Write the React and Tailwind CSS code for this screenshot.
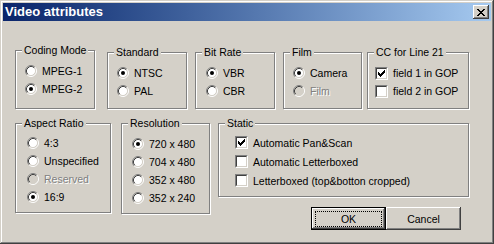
import React from 'react';

// Win2000-style "Video attributes" dialog

function Radio({ label, checked, disabled }) {
  return (
    <div className="flex items-center h-[18px]">
      <svg width="12" height="12" viewBox="0 0 12 12" className="shrink-0">
        <circle cx="6" cy="6" r="4.5" fill={disabled ? '#d4d0c8' : '#fff'} />
        <path d="M2.11 9.89 A5.5 5.5 0 0 1 9.89 2.11" fill="none" stroke="#808080" />
        <path d="M9.89 2.11 A5.5 5.5 0 0 1 2.11 9.89" fill="none" stroke="#fff" />
        <path d="M2.82 9.18 A4.5 4.5 0 0 1 9.18 2.82" fill="none" stroke="#404040" />
        <path d="M9.18 2.82 A4.5 4.5 0 0 1 2.82 9.18" fill="none" stroke="#d4d0c8" />
        {checked && <circle cx="6" cy="6" r="2" fill={disabled ? '#808080' : '#000'} />}
      </svg>
      <span
        className={`ml-[5px] whitespace-nowrap ${
          disabled ? 'text-[#808080] [text-shadow:1px_1px_0_#fff]' : 'text-black'
        }`}
      >
        {label}
      </span>
    </div>
  );
}

const CHECK = [
  [6, 0], [5, 1], [6, 1], [0, 2], [4, 2], [5, 2], [6, 2],
  [0, 3], [1, 3], [3, 3], [4, 3], [5, 3], [0, 4], [1, 4], [2, 4], [3, 4], [4, 4],
  [1, 5], [2, 5], [3, 5], [2, 6],
];

function Check({ label, checked, className = 'h-[18px]' }) {
  return (
    <div className={`flex items-center ${className}`}>
      <span className="w-[13px] h-[13px] shrink-0 border border-t-[#808080] border-l-[#808080] border-r-white border-b-white">
        <span className="block w-full h-full bg-white border border-t-[#404040] border-l-[#404040] border-r-[#d4d0c8] border-b-[#d4d0c8] p-[1px]">
          {checked && (
            <svg width="7" height="7" viewBox="0 0 7 7" shapeRendering="crispEdges" className="block">
              {CHECK.map(([x, y]) => (
                <rect key={`${x}-${y}`} x={x} y={y} width="1" height="1" fill="#000" />
              ))}
            </svg>
          )}
        </span>
      </span>
      <span className="ml-[5px] whitespace-nowrap">{label}</span>
    </div>
  );
}

function Group({ label, className, children }) {
  return (
    <div className={`relative shrink-0 border border-[#808080] shadow-[inset_1px_1px_0_#fff,1px_1px_0_#fff] ${className}`}>
      <span className="absolute -top-[8px] left-[6px] bg-[#d4d0c8] px-[2px] leading-[14px] whitespace-nowrap">
        {label}
      </span>
      {children}
    </div>
  );
}

const bevel =
  'shadow-[inset_-1px_-1px_0_#404040,inset_1px_1px_0_#fff,inset_-2px_-2px_0_#808080,inset_2px_2px_0_#d4d0c8]';

export default function App() {
  return (
    <div className="w-[494px] h-[244px] bg-[#d4d0c8] p-[3px] font-['Liberation_Sans',Arial,sans-serif] text-[10.5px] leading-[18px] text-black shadow-[inset_-1px_-1px_0_#404040,inset_1px_1px_0_#d4d0c8,inset_-2px_-2px_0_#808080,inset_2px_2px_0_#fff] overflow-hidden">
      {/* title bar */}
      <div className="h-[18px] flex items-center justify-between bg-gradient-to-r from-[#0a246a] to-[#a6caf0] pl-[2px] pr-[2px]">
        <span className="text-white font-bold text-[13px] leading-[18px]">Video attributes</span>
        <div className={`w-[16px] h-[14px] bg-[#d4d0c8] flex items-center justify-center ${bevel}`}>
          <svg width="8" height="7" viewBox="0 0 8 7" shapeRendering="crispEdges">
            <path d="M0 0h2v1h-2zM6 0h2v1h-2zM1 1h2v1h-2zM5 1h2v1h-2zM2 2h4v1h-4zM3 3h2v1h-2zM2 4h4v1h-4zM1 5h2v1h-2zM5 5h2v1h-2zM0 6h2v1h-2zM6 6h2v1h-2z" fill="#000" />
          </svg>
        </div>
      </div>

      <div className="pl-[12px]">
        {/* row 1 */}
        <div className="flex items-start mt-[29px]">
          <Group label="Coding Mode" className="w-[80px] h-[59px] pt-[11px] pl-[9px]">
            <Radio label="MPEG-1" />
            <Radio label="MPEG-2" checked />
          </Group>
          <Group label="Standard" className="ml-[12px] mt-[2px] w-[80px] h-[57px] pt-[11px] pl-[9px]">
            <Radio label="NTSC" checked />
            <Radio label="PAL" />
          </Group>
          <Group label="Bit Rate" className="ml-[8px] mt-[2px] w-[80px] h-[57px] pt-[11px] pl-[10px]">
            <Radio label="VBR" checked />
            <Radio label="CBR" />
          </Group>
          <Group label="Film" className="ml-[8px] mt-[2px] w-[79px] h-[57px] pt-[11px] pl-[9px]">
            <Radio label="Camera" checked />
            <Radio label="Film" disabled />
          </Group>
          <Group label="CC for Line 21" className="ml-[5px] mt-[2px] w-[102px] h-[57px] pt-[11px] pl-[7px]">
            <Check label="field 1 in GOP" checked />
            <Check label="field 2 in GOP" />
          </Group>
        </div>

        {/* row 2 */}
        <div className="flex items-start mt-[14px]">
          <Group label="Aspect Ratio" className="w-[96px] h-[90px] pt-[10px] pl-[11px]">
            <Radio label="4:3" />
            <Radio label="Unspecified" />
            <Radio label="Reserved" disabled />
            <Radio label="16:9" checked />
          </Group>
          <Group label="Resolution" className="ml-[10px] w-[89px] h-[91px] pt-[11px] pl-[10px]">
            <Radio label="720 x 480" checked />
            <Radio label="704 x 480" />
            <Radio label="352 x 480" />
            <Radio label="352 x 240" />
          </Group>
          <div className="ml-[8px] w-[251px] flex flex-col">
            <Group label="Static" className="w-[251px] h-[74px] pt-[9px] pl-[16px]">
              <Check label="Automatic Pan&Scan" checked className="h-[19px]" />
              <Check label="Automatic Letterboxed" className="h-[19px]" />
              <Check label="Letterboxed (top&botton cropped)" className="h-[19px]" />
            </Group>
            <div className="flex justify-end mt-[10px] mr-[8px]">
              <div className="relative w-[75px] h-[23px] border border-black">
                <div className={`w-full h-full flex items-center justify-center ${bevel}`}>OK</div>
                <div className="absolute left-[3px] right-[3px] top-[3px] bottom-[2px] border border-dotted border-black" />
              </div>
              <div className={`w-[75px] h-[23px] flex items-center justify-center ${bevel}`}>Cancel</div>
            </div>
          </div>
        </div>
      </div>
    </div>
  );
}
